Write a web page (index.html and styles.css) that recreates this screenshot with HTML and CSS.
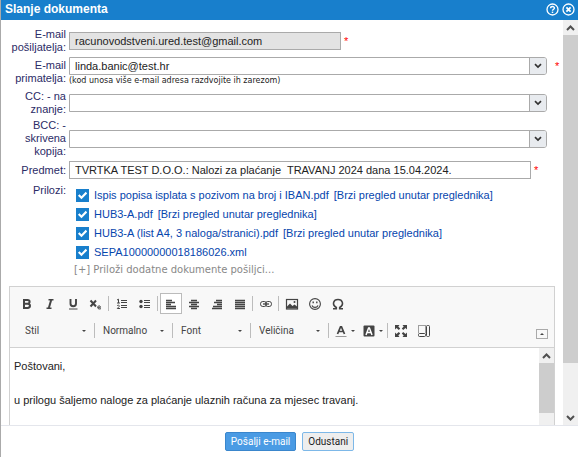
FILE: index.html
```html
<!DOCTYPE html>
<html lang="hr">
<head>
<meta charset="utf-8">
<title>Slanje dokumenta</title>
<link rel="stylesheet" href="styles.css">
</head>
<body>
<form class="dialog">
  <header class="titlebar">
    <h1>Slanje dokumenta</h1>
    <button type="button" class="title-btn" aria-label="Pomoć">
      <svg width="13" height="13" viewBox="0 0 13 13" fill="none" stroke="currentColor"><circle cx="6.5" cy="6.5" r="5.5" stroke-width="1.3"/><path d="M4.6 5.3C4.6 2.9 8.5 3 8.4 5.2C8.3 6.4 6.5 6.2 6.5 7.8" stroke-width="1.4"/><path d="M6.5 8.6V10" stroke-width="1.5"/></svg>
    </button>
    <button type="button" class="title-btn" aria-label="Zatvori">
      <svg width="13" height="13" viewBox="0 0 13 13" fill="none" stroke="currentColor"><circle cx="6.5" cy="6.5" r="5.5" stroke-width="1.3"/><path d="M4.4 4.4l4.2 4.2M8.6 4.4L4.4 8.6" stroke-width="1.8"/></svg>
    </button>
  </header>

  <div class="viewport">
    <main class="content">
      <div class="fields">
        <label for="from">E-mail pošiljatelja:</label>
        <div class="field">
          <input id="from" class="box sender" type="text" value="racunovodstveni.ured.test@gmail.com" readonly>
          <span class="req">*</span>
        </div>

        <label for="to">E-mail primatelja:</label>
        <div class="field-stack">
          <div class="field">
            <div class="combo">
              <input id="to" type="text" value="linda.banic@test.hr">
              <button type="button" aria-label="Odaberi primatelja"><svg width="8" height="6" viewBox="0 0 8 6"><path d="M1 1.2L4 4L7 1.2" fill="none" stroke="#333" stroke-width="1.7"/></svg></button>
            </div>
            <span class="req outer">*</span>
          </div>
          <small class="hint">(kod unosa više e-mail adresa razdvojite ih zarezom)</small>
        </div>

        <label for="cc">CC: - na znanje:</label>
        <div class="field">
          <div class="combo">
            <input id="cc" type="text">
            <button type="button" aria-label="Odaberi CC"><svg width="8" height="6" viewBox="0 0 8 6"><path d="M1 1.2L4 4L7 1.2" fill="none" stroke="#333" stroke-width="1.7"/></svg></button>
          </div>
        </div>

        <label for="bcc">BCC: - skrivena kopija:</label>
        <div class="field">
          <div class="combo">
            <input id="bcc" type="text">
            <button type="button" aria-label="Odaberi BCC"><svg width="8" height="6" viewBox="0 0 8 6"><path d="M1 1.2L4 4L7 1.2" fill="none" stroke="#333" stroke-width="1.7"/></svg></button>
          </div>
        </div>

        <label for="subject">Predmet:</label>
        <div class="field subject">
          <input id="subject" class="box" type="text" value="TVRTKA TEST D.O.O.: Nalozi za plaćanje  TRAVANJ 2024 dana 15.04.2024.">
          <span class="req">*</span>
        </div>

        <span class="group-label" id="att">Prilozi:</span>
        <div class="attachments" role="group" aria-labelledby="att">
          <div class="att"><input type="checkbox" checked aria-label="Ispis popisa isplata"><a href="#a1">Ispis popisa isplata s pozivom na broj i IBAN.pdf</a><a href="#p1">[Brzi pregled unutar preglednika]</a></div>
          <div class="att"><input type="checkbox" checked aria-label="HUB3-A"><a href="#a2">HUB3-A.pdf</a><a href="#p2">[Brzi pregled unutar preglednika]</a></div>
          <div class="att"><input type="checkbox" checked aria-label="HUB3-A list A4"><a href="#a3">HUB3-A (list A4, 3 naloga/stranici).pdf</a><a href="#p3">[Brzi pregled unutar preglednika]</a></div>
          <div class="att"><input type="checkbox" checked aria-label="SEPA"><a href="#a4">SEPA10000000018186026.xml</a></div>
          <button type="button" class="add">[+] Priloži dodatne dokumente pošiljci...</button>
        </div>
      </div>

      <section class="editor">
        <div class="toolbar">
          <div class="tools">
            <button type="button" class="tool" aria-label="Podebljano"><svg viewBox="0 0 14 14"><path d="M4 2V12M4 3H7.500C10.300 3 10.300 6.700 7.500 6.700H4M7.500 6.700C10.800 6.700 10.800 11 7.500 11H4" stroke-width="2"/></svg></button>
            <button type="button" class="tool" aria-label="Kurziv"><svg viewBox="0 0 14 14"><path d="M5.500 2.800H10.500M3.500 11.200H8.500" stroke-width="1.400"/><path d="M8.200 3L5.800 11" stroke-width="2"/></svg></button>
            <button type="button" class="tool" aria-label="Podcrtano"><svg viewBox="0 0 14 14"><path d="M4.500 2V6.500C4.500 10.200 10 10.200 10 6.500V2" stroke-width="1.900"/><path d="M3 12H11.500" stroke-width="1"/></svg></button>
            <button type="button" class="tool" aria-label="Indeks"><svg viewBox="0 0 14 14"><path d="M1.500 3.500L7 9.500M7 3.500L1.500 9.500" stroke-width="2"/><path d="M8.700 10.300H11.500C11.500 8.300 8.700 8.300 8.700 10.500C8.700 12.300 11 12.200 12 11.600" stroke-width="1"/></svg></button>
            <i class="sep"></i>
            <button type="button" class="tool" aria-label="Numerirani popis"><svg viewBox="0 0 14 14"><path d="M2 3L3.500 2.200V6M2 6H5M2 8.800C3.500 7.500 5.500 8.500 3.500 10.200L2.300 11.500H5" stroke-width="1"/><path d="M6 3.500H12M6 5.500H12M6 8.500H12M6 10.500H12" stroke-width="1"/></svg></button>
            <button type="button" class="tool" aria-label="Popis"><svg viewBox="0 0 14 14"><circle cx="3" cy="4.500" r="1.700" fill="currentColor" stroke="none"/><circle cx="3" cy="9.500" r="1.700" fill="currentColor" stroke="none"/><path d="M6 3.500H12M6 5.500H12M6 8.500H12M6 10.500H12" stroke-width="1"/></svg></button>
            <i class="sep"></i>
            <button type="button" class="tool active" aria-label="Lijevo"><svg viewBox="0 0 14 14"><path d="M2 3.500H8M2 5.500H11M2 7.500H7M2 9.500H12M2 11.500H12" stroke-width="1.300"/></svg></button>
            <button type="button" class="tool" aria-label="Centrirano"><svg viewBox="0 0 14 14"><path d="M4 3.500H10M2 5.500H12M4 7.500H10M2 9.500H12M4 11.500H10" stroke-width="1.300"/></svg></button>
            <button type="button" class="tool" aria-label="Desno"><svg viewBox="0 0 14 14"><path d="M6 3.500H12M4 5.500H12M7 7.500H12M3 9.500H12M2 11.500H12" stroke-width="1.300"/></svg></button>
            <button type="button" class="tool" aria-label="Obostrano"><svg viewBox="0 0 14 14"><path d="M2 3.500H12M2 5.500H12M2 7.500H12M2 9.500H12M2 11.500H12" stroke-width="1.300"/></svg></button>
            <i class="sep"></i>
            <button type="button" class="tool" aria-label="Poveznica"><svg viewBox="0 0 14 14"><rect x="1.500" y="4.500" width="6" height="5" rx="2.300"/><rect x="6.500" y="4.500" width="6" height="5" rx="2.300"/><path d="M4 7H10" stroke-width="1.300"/></svg></button>
            <i class="sep"></i>
            <button type="button" class="tool" aria-label="Slika"><svg viewBox="0 0 14 14"><rect x="1.500" y="2.500" width="11" height="9.500" stroke-width="1.200"/><path d="M2 11.500V9.500L5 6.500L7.500 9L9.500 7.500L12 9.500V11.500Z" fill="currentColor" stroke="none"/><circle cx="9.500" cy="5" r="1" fill="currentColor" stroke="none"/></svg></button>
            <button type="button" class="tool" aria-label="Smješko"><svg viewBox="0 0 14 14"><circle cx="7" cy="7" r="5.400" stroke-width="1.100"/><path d="M4 8.500C5 11 9 11 10 8.500" stroke-width="1.200"/><path d="M5.200 4.500V6.300M8.800 4.500V6.300" stroke-width="1.400"/></svg></button>
            <button type="button" class="tool" aria-label="Posebni znakovi"><svg viewBox="0 0 14 14"><path d="M2 11.700H5.300V10.500C.5 7.500 2.500 2.500 7 2.500S13.500 7.500 8.700 10.500V11.700H12" stroke-width="1.600"/></svg></button>
          </div>
          <div class="tools second">
            <label class="pick"><select aria-label="Stil"><option>Stil</option></select><i class="caret"></i></label>
            <i class="sep"></i>
            <label class="pick"><select aria-label="Oblik"><option>Normalno</option></select><i class="caret"></i></label>
            <i class="sep"></i>
            <label class="pick"><select aria-label="Font"><option>Font</option></select><i class="caret"></i></label>
            <i class="sep"></i>
            <label class="pick"><select aria-label="Veličina"><option>Veličina</option></select><i class="caret"></i></label>
            <i class="sep"></i>
            <button type="button" class="tool colour" aria-label="Boja teksta"><svg viewBox="0 0 14 14"><path d="M3.500 10L6.500 2.800H7.500L10.500 10M4.800 7.500H9.200" stroke-width="1.700"/><path d="M1.500 12.500H12.500" stroke="#999"/></svg><i class="caret"></i></button>
            <button type="button" class="tool colour" aria-label="Boja pozadine"><svg viewBox="0 0 14 14"><rect x="1.500" y="1.500" width="11" height="11" rx="1" fill="currentColor" stroke="none"/><path d="M4 11L6.600 4H7.400L10 11M5 8.500H9" stroke="#fff" stroke-width="1.500"/></svg><i class="caret"></i></button>
            <i class="sep"></i>
            <button type="button" class="tool" aria-label="Povećaj"><svg viewBox="0 0 14 14"><path d="M1 1H5.500L4.300 2.400L6.200 4.600L4.800 6L2.500 4L1 5.500ZM13 1V5.500L11.500 4L9.200 6L7.800 4.600L9.700 2.400L8.500 1ZM1 13V8.500L2.500 10L4.800 8L6.200 9.400L4.300 11.600L5.500 13ZM13 13H8.500L9.700 11.600L7.800 9.400L9.200 8L11.500 10L13 8.500Z" fill="currentColor" stroke="none"/></svg></button>
            <button type="button" class="tool" aria-label="Prikaži blokove"><svg viewBox="0 0 14 14"><path d="M1.500 8.500V1.500H8.500V8.500" stroke-dasharray="1 1"/><rect x="1.500" y="9.500" width="7" height="3" rx="1"/><rect x="9.500" y="1.500" width="3" height="11" rx="1"/></svg></button>
            <button type="button" class="collapse" aria-label="Sakrij alatnu traku"><i class="caret up"></i></button>
          </div>
        </div>
        <div class="editor-body">
          <div class="message" contenteditable="true" role="textbox" aria-label="Poruka">
            <p>Poštovani,</p>
            <p>u prilogu šaljemo naloge za plaćanje ulaznih računa za mjesec travanj.</p>
          </div>
          <div class="scroll">
            <svg width="9" height="6" viewBox="0 0 9 6"><path d="M1 5L4.500 1.500L8 5" fill="none" stroke="#505050" stroke-width="2"/></svg>
            <i class="thumb"></i>
          </div>
        </div>
      </section>
    </main>
    <div class="scroll page-scroll">
      <svg width="9" height="6" viewBox="0 0 9 6"><path d="M1 5L4.500 1.500L8 5" fill="none" stroke="#505050" stroke-width="2"/></svg>
      <i class="thumb"></i>
      <svg class="down" width="9" height="6" viewBox="0 0 9 6"><path d="M1 1L4.500 4.500L8 1" fill="none" stroke="#505050" stroke-width="2"/></svg>
    </div>
  </div>

  <footer class="actions">
    <button type="submit" class="btn primary">Pošalji e-mail</button>
    <button type="button" class="btn">Odustani</button>
  </footer>
</form>
</body>
</html>
```
FILE: styles.css
```css
* { box-sizing: border-box; }

body {
  margin: 0;
  font: 11px/13px "Liberation Sans", Arial, sans-serif;
  color: #222;
  background: #fff;
}

input, button, select { font: inherit; color: inherit; margin: 0; }
button { padding: 0; border: 0; background: none; }
svg { display: block; }

.dialog {
  display: flex;
  flex-direction: column;
  height: 100vh;
  border-left: 1px solid #aaa;
}

.titlebar {
  display: flex;
  align-items: center;
  gap: 3px;
  height: 20px;
  flex: none;
  padding: 0 3px 2px 4px;
  background: #187fcc;
  color: #fff;
}
.titlebar h1 { flex: 1; margin: 0; font-size: 12px; }

.viewport { flex: 1; min-height: 0; display: flex; }
.content {
  flex: 1;
  min-width: 0;
  display: flex;
  flex-direction: column;
  overflow: hidden;
  padding: 8px 8px 0;
}

.fields {
  display: grid;
  grid-template-columns: 57px 1fr;
  column-gap: 3px;
  row-gap: 3px;
  align-items: center;
}
.fields > label, .group-label { text-align: right; color: #2b2b66; }
.group-label { align-self: start; padding-top: 2px; }

.field { display: flex; align-items: center; padding-right: 8px; }
.field-stack { position: relative; }
.box, .combo {
  height: 18px;
  border: 1px solid #aaa;
  background: #fff;
}
.box { flex: 1; min-width: 0; padding: 0 5px; }
.box.sender { flex: 0 1 272px; background: #e3e3e3; }
.subject { padding-right: 14px; }
.combo {
  flex: 1;
  min-width: 0;
  display: flex;
  border-radius: 0 3px 3px 0;
  overflow: hidden;
}
.combo input { flex: 1; min-width: 0; border: 0; padding: 0 5px; background: none; outline: 0; }
.combo button {
  width: 17px;
  display: grid;
  place-items: center;
  border-left: 1px solid #aaa;
  background: #e8ebef;
}
.req { width: 7px; margin-left: 3px; color: #f00; }
.req.outer { position: absolute; right: -7px; }
.hint { display: block; font: 8px/12px "DejaVu Sans", Verdana, sans-serif; }

.attachments { padding: 4px 0 0 7px; }
.att { display: flex; align-items: center; gap: 5px; height: 19px; }
.att a { color: #0645ad; text-decoration: none; }
.att input {
  appearance: none;
  width: 13px;
  height: 13px;
  background: #187fcc;
}
.att input:checked::before {
  content: "";
  display: block;
  height: 13px;
  background: #fff;
  clip-path: polygon(15% 52%, 27% 40%, 42% 55%, 75% 22%, 86% 34%, 42% 78%);
}
.add { display: block; margin-left: -2px; padding: 2px 0; font: 10px/12px "DejaVu Sans", Verdana, sans-serif; color: #888; }

.editor {
  flex: 1;
  margin-top: 8px;
  display: flex;
  flex-direction: column;
  border: 1px solid #d1d1d1;
  border-bottom: 0;
}
.toolbar {
  flex: none;
  padding: 6px 6px 6px;
  display: flex;
  flex-direction: column;
  gap: 6px;
  border-bottom: 1px solid #d1d1d1;
  background: #f8f8f8;
  color: #444;
}
.tools { display: flex; align-items: center; gap: 1px; }
.tools.second { padding-left: 3px; }
.tool {
  width: 22px;
  height: 21px;
  display: grid;
  place-items: center;
}
.tool svg { width: 14px; height: 14px; fill: none; stroke: currentColor; }
.tool.active { border: 1px solid #bbb; background: #fff; }
.tool.colour { display: flex; align-items: center; justify-content: center; gap: 3px; width: 27px; }
.sep { flex: none; width: 1px; height: 15px; margin-right: 1px; background: #bcbcbc; }
.pick { display: flex; align-items: center; width: 74px; padding: 0 7px 0 6px; }
.pick select { appearance: none; flex: 1; min-width: 0; padding: 0; border: 0; background: none; font: 10px/13px Roboto, sans-serif; }
.caret { flex: none; border: 2px solid transparent; border-top-color: #444; border-bottom: 0; }
.caret.up { border-bottom: 2px solid #444; border-top: 0; }
.collapse {
  display: grid;
  place-items: center;
  width: 12px;
  height: 10px;
  margin: 6px 0 0 auto;
  border: 1px solid #aaa;
}

.editor-body { flex: 1; min-height: 0; display: flex; overflow: hidden; }
.message { flex: 1; padding: 10px 4px; line-height: 17px; outline: 0; }
.message p { margin: 0 0 17px; }

.scroll {
  flex: none;
  width: 15px;
  display: flex;
  flex-direction: column;
  align-items: center;
  padding-top: 5px;
  background: #f0f0f0;
}
.scroll .thumb { width: 100%; height: 60%; margin-top: 4px; background: #cdcdcd; }
.page-scroll .thumb { height: 82%; }
.scroll .down { margin: auto 0 4px; }

.actions {
  flex: none;
  height: 32px;
  display: flex;
  align-items: center;
  justify-content: center;
  gap: 6px;
  border-top: 1px solid #e4e6ec;
}
.btn {
  height: 19px;
  padding: 0 5px;
  border: 1px solid #7db8e8;
  border-radius: 2px;
  background: #eee;
  font: 10px/13px Roboto, sans-serif;
}
.btn.primary { border-color: #3a86cc; background: #4a9be4; color: #fff; }
```
